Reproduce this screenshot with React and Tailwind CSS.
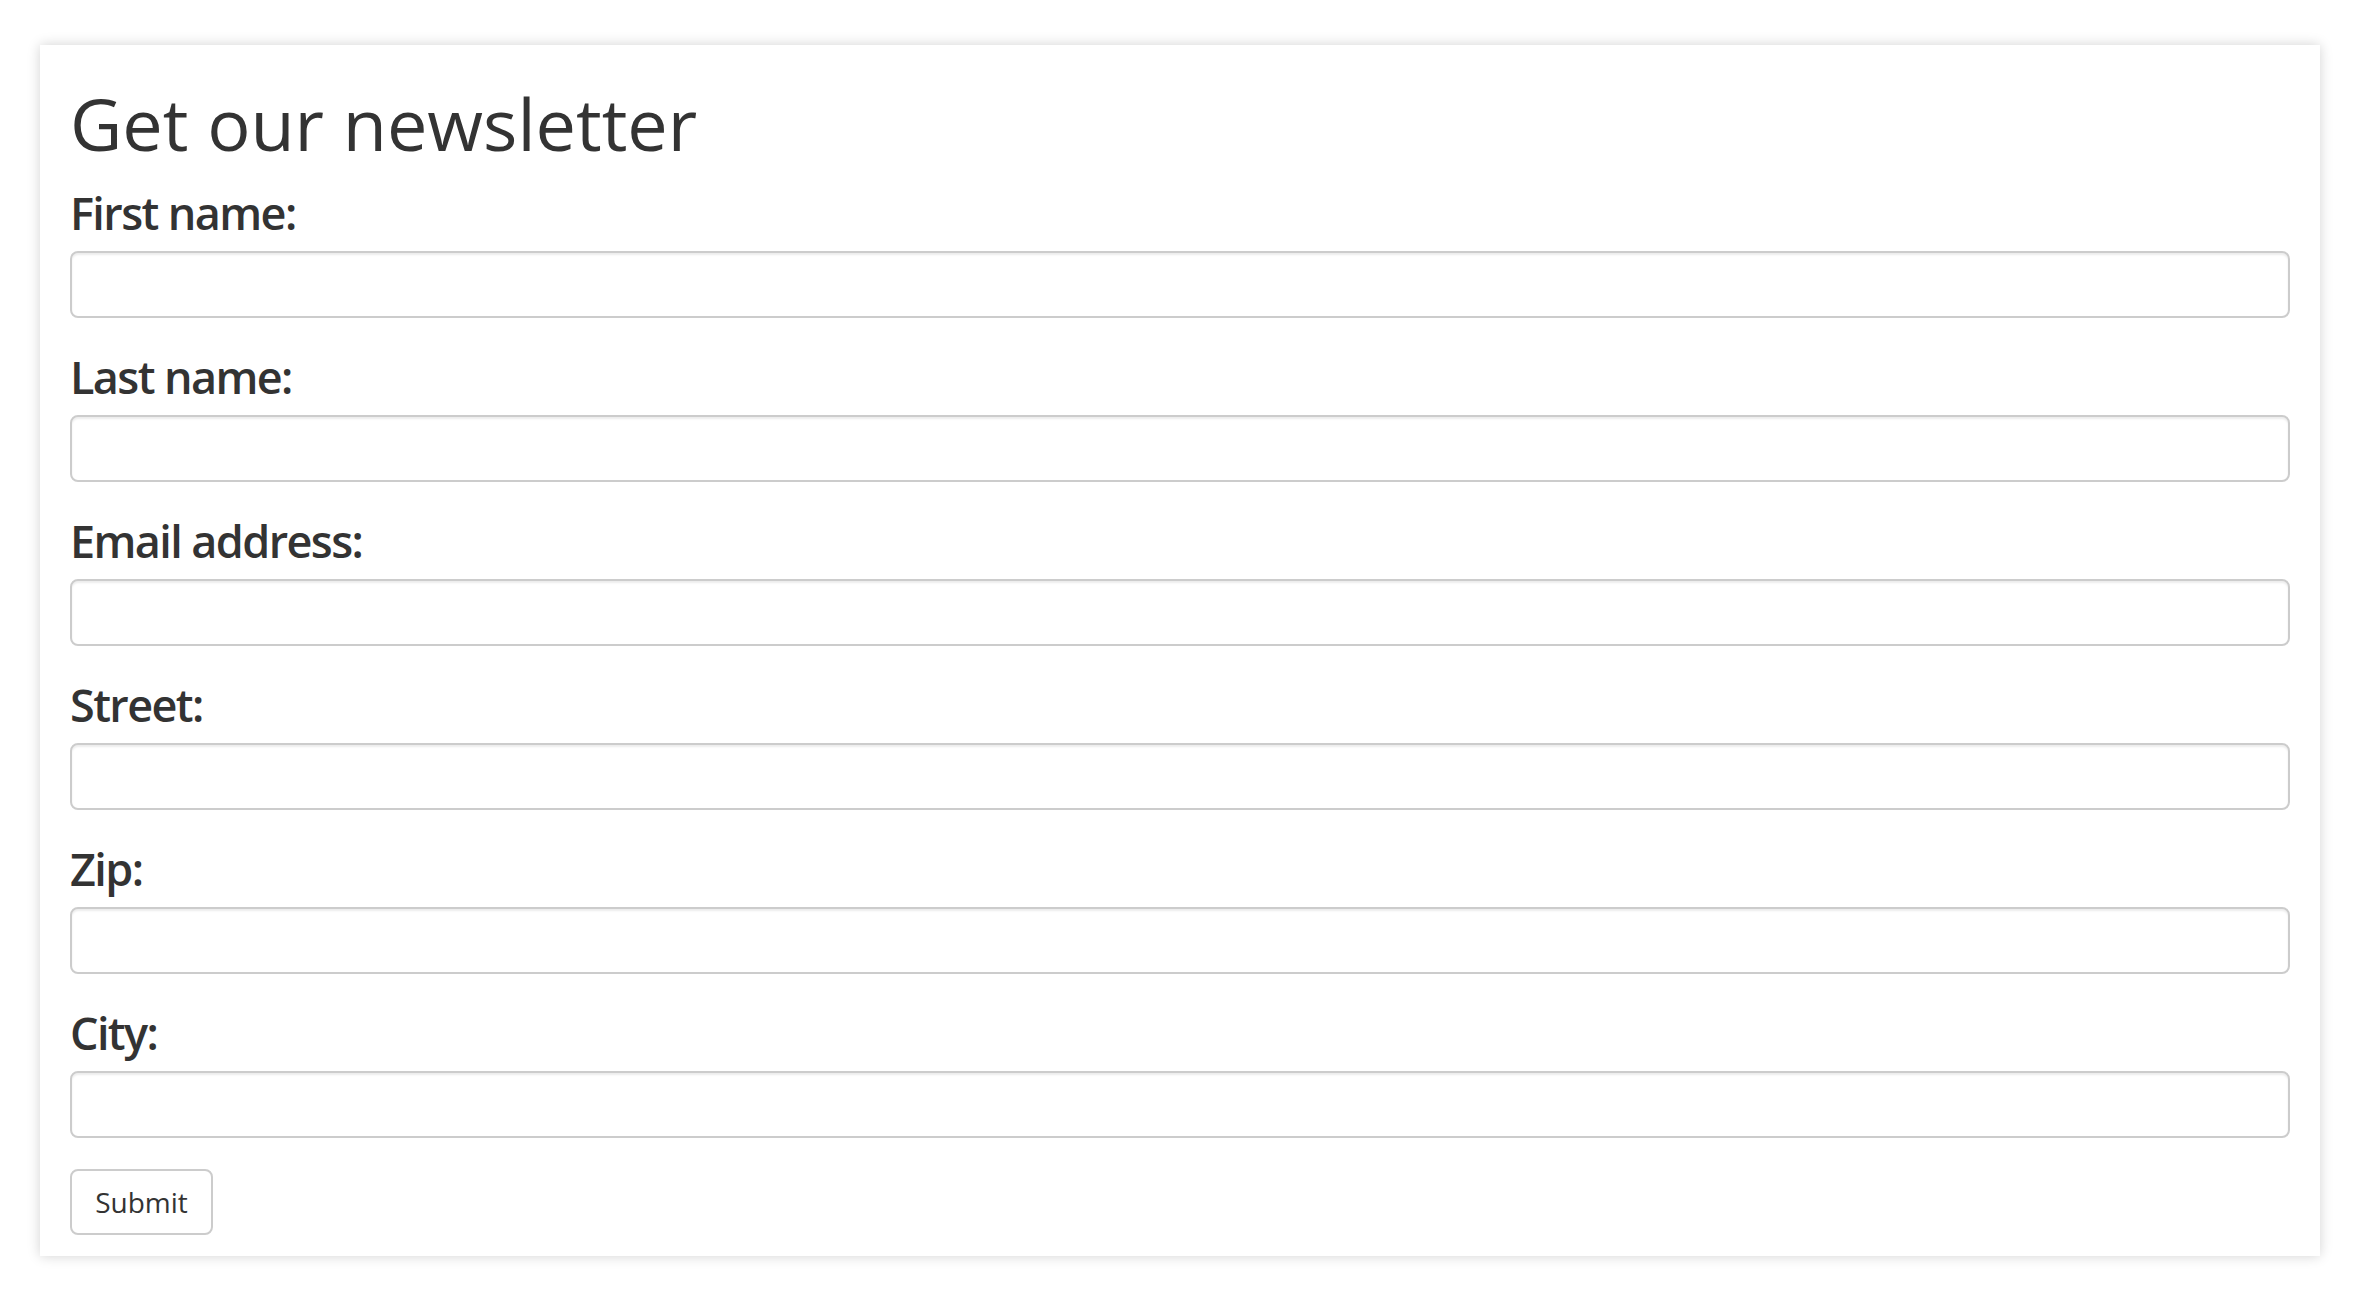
import React from 'react'

const fields = [
  { id: 'first', label: 'First name:' },
  { id: 'last', label: 'Last name:' },
  { id: 'email', label: 'Email address:' },
  { id: 'street', label: 'Street:' },
  { id: 'zip', label: 'Zip:' },
  { id: 'city', label: 'City:' },
]

const App = () => {
  return (
    <div className="min-h-[1310px] bg-white pt-[45px] font-['Open_Sans',sans-serif] text-[#333]">
      <form
        onSubmit={(e) => e.preventDefault()}
        className="ml-[40px] flex w-[2280px] flex-col bg-white pb-[21px] pl-[30px] pr-[30px] pt-[39px] shadow-[0_0_12px_rgba(0,0,0,0.18)]"
      >
        <h1 className="mb-[22px] text-[72px] font-normal leading-[79px]">Get our newsletter</h1>

        {fields.map((field) => (
          <div key={field.id} className="mb-[31px] flex flex-col">
            <label
              htmlFor={field.id}
              className="mb-[10px] text-[45px] font-semibold leading-[56px] tracking-[-1.6px]"
            >
              {field.label}
            </label>
            <input
              id={field.id}
              type="text"
              className="h-[67px] w-full rounded-[8px] border-2 border-[#ccc] bg-white px-[24px] text-[28px] shadow-[inset_0_2px_2px_rgba(0,0,0,0.075)] outline-none"
            />
          </div>
        ))}

        <div>
          <button
            type="submit"
            className="h-[66px] w-[143px] rounded-[8px] border-2 border-[#ccc] bg-white text-[28px] leading-[40px] text-[#333]"
          >
            Submit
          </button>
        </div>
      </form>
    </div>
  )
}

export default App
